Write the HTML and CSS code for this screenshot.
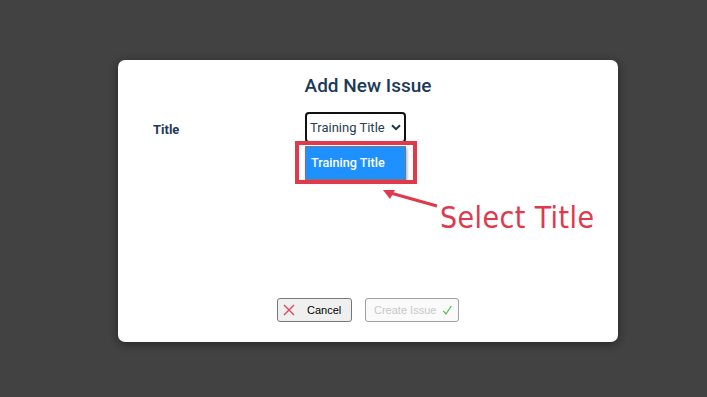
FILE: index.html
```html
<html>
<head>
	<title>Add New Issue</title>
	<link rel="stylesheet" href="styles.css">
</head>
<body>
	<div class="modal">
		<h2 class="modalTitle">Add New Issue</h2>
		<div class="formRow">
			<label class="fieldLabel">Title</label>
			<div class="selectWrap">
				<div class="selectBox">
					<span>Training Title</span>
					<svg class="chevron" width="10" height="7" viewBox="0 0 10 7"><path d="M1 1.2 L5 5.2 L9 1.2" fill="none" stroke="#1c3550" stroke-width="2"/></svg>
				</div>
				<div class="optionList">
					<div class="optionItem">Training Title</div>
				</div>
				<div class="markBox"></div>
			</div>
		</div>
		<div class="modalFooter">
			<button class="btn btnCancel" type="button">
				<svg width="12" height="12" viewBox="0 0 12 12"><path d="M1 1 L11 11 M11 1 L1 11" stroke="#e0485a" stroke-width="1.4"/></svg>
				<span>Cancel</span>
			</button>
			<button class="btn btnCreate" type="button" disabled>
				<span>Create Issue</span>
				<svg width="12" height="12" viewBox="0 0 12 12"><path d="M1.5 7 L4.5 10.5 L10.5 1.5" fill="none" stroke="#4cc04a" stroke-width="1.4"/></svg>
			</button>
		</div>
		<svg class="markArrow" width="60" height="24" viewBox="0 0 60 24"><path d="M56 20 L6 6" stroke="#e0394c" stroke-width="3"/><path d="M2 4 L14 4 L9 13 Z" fill="#e0394c"/></svg>
		<div class="markText">Select Title</div>
	</div>
</body>
</html>
```
FILE: styles.css
```css
body {
	margin: 0;
	background-color: #424242;
	height: 397px;
	font-family: Roboto, "Liberation Sans", sans-serif;
}
.modal {
	position: relative;
	box-sizing: border-box;
	margin: 60px 0 0 118px;
	width: 500px;
	height: 282px;
	background-color: white;
	border-radius: 7px;
	box-shadow: 0 2px 10px rgba(0,0,0, 0.45);
	padding: 14px 0 20px 0;
	display: flex;
	flex-direction: column;
}
.modalTitle {
	margin: 0;
	text-align: center;
	font-size: 19px;
	font-weight: 500;
	color: #1c3a58;
	line-height: 24px;
}
.formRow {
	display: flex;
	align-items: flex-start;
	margin-top: 14px;
	padding-left: 35px;
}
.fieldLabel {
	width: 152px;
	padding-top: 2px;
	font-size: 13px;
	font-weight: bold;
	color: #1c3a58;
	line-height: 31px;
}
.selectWrap {
	position: relative;
	width: 101px;
}
.selectBox {
	box-sizing: border-box;
	height: 31px;
	border: 2px solid #111;
	border-radius: 4px;
	display: flex;
	align-items: center;
	justify-content: space-between;
	padding: 0 3px 0 3px;
	font-size: 13px;
	color: #2a3d52;
}
.optionList {
	margin-top: 3px;
	box-sizing: border-box;
	height: 34px;
	border: 1px solid #7a7a7a;
	background-color: #1e90ff;
	box-shadow: 1px 2px 3px rgba(0,0,0, 0.35);
}
.optionItem {
	padding-left: 5px;
	line-height: 31px;
	font-size: 12.6px;
	font-weight: 500;
	color: white;
}
.markBox {
	position: absolute;
	top: 29px;
	left: -10px;
	width: 122px;
	height: 43px;
	box-sizing: border-box;
	border: 4px solid #e0394c;
}
.markArrow {
	position: absolute;
	left: 263px;
	top: 126px;
}
.markText {
	position: absolute;
	left: 322px;
	top: 140px;
	font-family: "DejaVu Sans", sans-serif;
	font-stretch: condensed;
	font-size: 30px;
	letter-spacing: 0.4px;
	color: #e0394c;
	line-height: 36px;
}
.modalFooter {
	margin-top: auto;
	display: flex;
	justify-content: center;
	gap: 13px;
}
.btn {
	height: 24px;
	box-sizing: border-box;
	border: 1px solid #767676;
	border-radius: 3px;
	background-color: #efefef;
	font-family: "Liberation Sans", Arial, sans-serif;
	font-size: 11px;
	white-space: nowrap;
	display: flex;
	align-items: center;
	padding: 0 5px;
}
.btnCancel {
	width: 75px;
	color: #000;
	gap: 12px;
}
.btnCreate {
	width: 94px;
	background-color: #fafafa;
	border-color: #a0a0a0;
	color: #c8c8c8;
	gap: 6px;
	padding-left: 8px;
}
```
